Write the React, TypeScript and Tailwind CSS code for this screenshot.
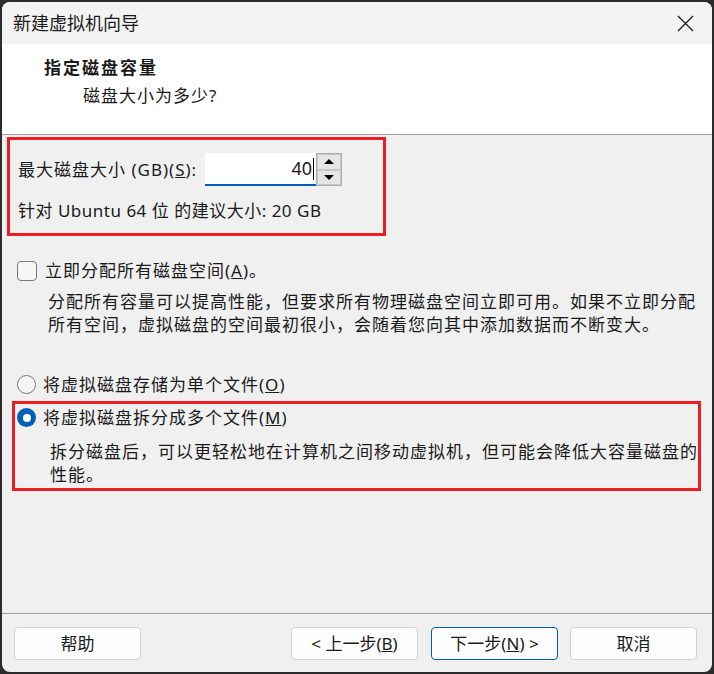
import React from "react";

const Radio = ({ checked }: { checked?: boolean }) =>
  checked ? (
    <span className="w-[19px] h-[19px] rounded-full bg-[#005fb8] flex items-center justify-center shrink-0">
      <span className="w-[8px] h-[8px] rounded-full bg-white" />
    </span>
  ) : (
    <span className="w-[19px] h-[19px] rounded-full border border-[#7a7a7a] bg-[#f6f6f6] shrink-0" />
  );

const Btn = ({ children, primary, className = "" }: { children: React.ReactNode; primary?: boolean; className?: string }) => (
  <button
    className={`h-[33px] w-[127px] rounded-[4px] bg-[#fdfdfd] text-[17px] text-[#1a1a1a] flex items-center justify-center ${
      primary ? "border border-[#005fb8]" : "border border-[#d3d3d3]"
    } ${className}`}
  >
    {children}
  </button>
);

export default function App() {
  return (
    <div className="w-[714px] h-[674px] bg-[#2c2c2c] pl-[2px] pt-[2px] font-['Noto_Sans','Noto_Sans_CJK_SC',sans-serif] text-[#1a1a1a]">
      <div className="w-[710px] h-[670px] rounded-[8px] overflow-hidden flex flex-col bg-[#f0f0f0]">
        {/* title bar */}
        <div className="h-[42px] bg-[#f3f3f3] flex items-center justify-between pl-[11px] pr-[16px] shrink-0">
          <span className="text-[18px] leading-none">新建虚拟机向导</span>
          <svg width="17" height="17" viewBox="0 0 17 17" className="mr-[2px]">
            <path d="M1 1L16 16M16 1L1 16" stroke="#1a1a1a" strokeWidth="1.3" fill="none" />
          </svg>
        </div>

        {/* header */}
        <div className="h-[90px] bg-white shrink-0 pl-[42px] pt-[12px]">
          <div className="text-[17px] font-bold tracking-[2px] leading-[24px]">指定磁盘容量</div>
          <div className="pl-[39px] mt-[4px] text-[17px] tracking-[1px] leading-[24px]">磁盘大小为多少?</div>
        </div>
        <div className="h-px bg-[#a0a0a0] shrink-0" />

        {/* body */}
        <div className="flex-1 flex flex-col text-[17px] tracking-[1px]">
          <div className="ml-[5px] mt-[2px] w-[379px] h-[99px] border-[3px] border-[#ed1c24] pl-[8px] pt-[13px]">
            <div className="flex items-center h-[33px]">
              <span className="w-[187px]">
                最大磁盘大小 (GB)(<u>S</u>):
              </span>
              <div className="w-[111px] h-[33px] bg-white border-b-2 border-[#005fb8] flex items-center justify-end pr-[2px]">
                <span className="text-[18px] tracking-normal">40</span>
                <span className="w-px h-[22px] bg-black ml-[1px]" />
              </div>
              <div className="w-[26px] h-[33px] border border-[#acacac] flex flex-col bg-[#f0f0f0]">
                <div className="flex-1 border border-[#c8c8c8] bg-[#e6e6e6] flex items-center justify-center">
                  <span className="w-0 h-0 border-l-[5px] border-r-[5px] border-b-[5px] border-l-transparent border-r-transparent border-b-black" />
                </div>
                <div className="flex-1 border border-[#c8c8c8] bg-[#e6e6e6] flex items-center justify-center">
                  <span className="w-0 h-0 border-l-[5px] border-r-[5px] border-t-[5px] border-l-transparent border-r-transparent border-t-black" />
                </div>
              </div>
            </div>
            <div className="mt-[13px] leading-[23px] tracking-[0.5px]">针对 Ubuntu 64 位 的建议大小: 20 GB</div>
          </div>

          <div className="mt-[23px] ml-[15px] flex items-center h-[23px] gap-[8px]">
            <span className="w-[20px] h-[20px] rounded-[4px] border border-[#7a7a7a] bg-[#f6f6f6] shrink-0" />
            <span>
              立即分配所有磁盘空间(<u>A</u>)。
            </span>
          </div>
          <div className="ml-[46px] mt-[8px] mr-[12px] leading-[23px]">
            分配所有容量可以提高性能，但要求所有物理磁盘空间立即可用。如果不立即分配所有空间，虚拟磁盘的空间最初很小，会随着您向其中添加数据而不断变大。
          </div>

          <div className="mt-[37px] ml-[15px] flex items-center h-[23px] gap-[7px]">
            <Radio />
            <span>
              将虚拟磁盘存储为单个文件(<u>O</u>)
            </span>
          </div>

          <div className="ml-[10px] mt-[5px] w-[689px] h-[90px] border-[3px] border-[#ed1c24] pl-[2px] pt-[2px]">
            <div className="flex items-center h-[23px] gap-[7px]">
              <Radio checked />
              <span>
                将虚拟磁盘拆分成多个文件(<u>M</u>)
              </span>
            </div>
            <div className="pl-[33px] mt-[11px] leading-[23px]">
              拆分磁盘后，可以更轻松地在计算机之间移动虚拟机，但可能会降低大容量磁盘的性能。
            </div>
          </div>
        </div>

        {/* footer */}
        <div className="h-px bg-[#a0a0a0] shrink-0" />
        <div className="h-[58px] shrink-0 flex items-start pt-[13px] pl-[12px]">
          <Btn>帮助</Btn>
          <Btn className="ml-[150px]">&lt; 上一步(<u>B</u>)</Btn>
          <Btn primary className="ml-[13px]">
            下一步(<u>N</u>) &gt;
          </Btn>
          <Btn className="ml-[12px]">取消</Btn>
        </div>
      </div>
    </div>
  );
}
